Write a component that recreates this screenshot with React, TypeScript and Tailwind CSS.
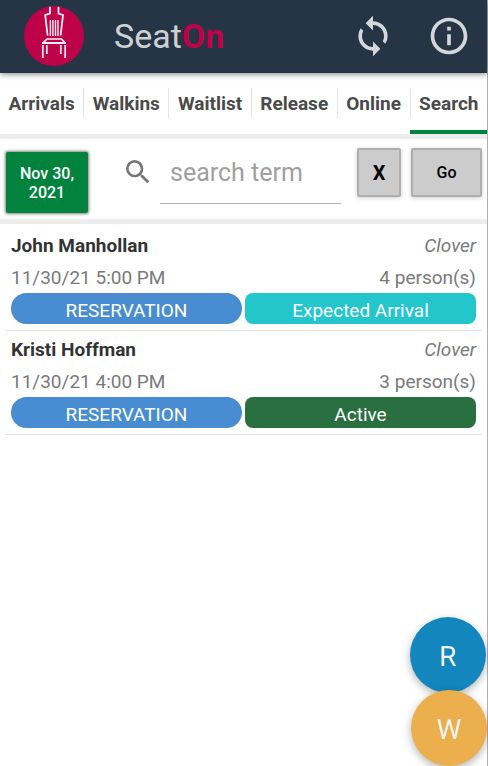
import React, { useState } from 'react';
import { MdInfoOutline, MdSearch, MdSync } from 'react-icons/md';

interface Reservation {
  id: number;
  name: string;
  time: string;
  location: string;
  persons: number;
  status: 'EXPECTED' | 'ACTIVE';
}

const tabs = ['Arrivals', 'Walkins', 'Waitlist', 'Release', 'Online', 'Search'];

const reservations: Reservation[] = [
  { id: 1, name: 'John Manhollan', time: '11/30/21 5:00 PM', location: 'Clover', persons: 4, status: 'EXPECTED' },
  { id: 2, name: 'Kristi Hoffman', time: '11/30/21 4:00 PM', location: 'Clover', persons: 3, status: 'ACTIVE' }
];

const getStatusColor = (status: Reservation['status']) => {
  switch (status) {
    case 'ACTIVE':
      return 'bg-[#2a6f3f]';
    default:
      return 'bg-[#23c6cb]';
  }
};

const getStatusLabel = (status: Reservation['status']) => {
  switch (status) {
    case 'ACTIVE':
      return 'Active';
    default:
      return 'Expected Arrival';
  }
};

function Logo() {
  return (
    <svg viewBox="0 0 60 60" className="size-15 shrink-0" fill="none" stroke="#f9eff3" aria-hidden="true">
      <circle cx="30" cy="30" r="30" fill="#bd0249" stroke="none" />
      {/* Back of the chair */}
      <path d="M26 .8v6.700l-4.800 1.500 2.400 20.500M34.500 .8v6.700l4.500 1.500-2.400 20.500" strokeWidth="1.8" />
      <path d="M26.400 14v16M28.900 14v16M31.500 14v16M34 14v16" strokeWidth="1.4" />
      {/* Seat */}
      <path d="M23 33h14.500l3.500 3.800H19z" strokeWidth="1.7" strokeLinejoin="round" />
      <path d="M18 37h24" strokeWidth="2" />
      {/* Legs */}
      <path d="M18.800 39v13M22.800 39v9M36.800 39v9M41.200 39v13" strokeWidth="1.7" />
    </svg>
  );
}

export default function App() {
  const [activeTab, setActiveTab] = useState('Search');
  const [term, setTerm] = useState('');

  return (
    <div className="min-h-screen border-r border-[#b0b0b0] bg-white font-[Roboto,sans-serif]">
      {/* Header */}
      <header className="relative flex h-[73px] items-center bg-[#253545] pr-4 pl-6 pb-0.5 shadow-[0_1px_6px_rgba(0,0,0,0.5)]">
        <Logo />
        <h1 className="ml-[30px] flex-1 text-[34px] leading-10 text-[#cfd1d2]">
          Seat<span className="font-bold text-[#bd0249]">On</span>
        </h1>
        <div className="flex items-center gap-8 text-[#d3d7da]">
          <button type="button" aria-label="Refresh">
            <MdSync className="size-11" />
          </button>
          <button type="button" aria-label="Info">
            <MdInfoOutline className="size-11" />
          </button>
        </div>
      </header>

      {/* Tabs */}
      <nav className="flex h-[61px]">
        {tabs.map((tab, i) => (
          <button
            key={tab}
            type="button"
            onClick={() => setActiveTab(tab)}
            className={`flex grow items-center border-b-4 pt-0.5 ${tab === activeTab ? 'border-b-[#02833d]' : 'border-b-transparent'}`}
          >
            <span
              className={`flex h-[30px] grow items-center justify-center pt-1 text-[19px] font-bold text-[#4a4a4a] ${i === 0 ? '' : 'border-l border-[#e4e4e4]'}`}
            >
              {tab}
            </span>
          </button>
        ))}
      </nav>

      {/* Search bar */}
      <form
        onSubmit={(e) => e.preventDefault()}
        className="flex h-[90px] items-start border-y-[5px] border-[#ededed] pt-[9px] pr-[5px] pl-1.5"
      >
        <button
          type="button"
          className="mt-1 h-[61px] w-[82px] rounded-xs bg-[#02833d] px-2 text-base leading-[19px] font-medium text-white shadow-[0_0_3px_1px_rgba(0,0,0,0.5)]"
        >
          Nov 30, 2021
        </button>
        <label htmlFor="term" className="mt-2 ml-[34px]">
          <MdSearch className="size-8 text-[#757575]" role="img" aria-label="Search term" />
        </label>
        <input
          id="term"
          value={term}
          onChange={(e) => setTerm(e.target.value)}
          placeholder="search term"
          className="ml-1.5 h-14 min-w-0 flex-1 border-b border-[#b5b5b5] px-2.5 pb-1.5 text-[25px] text-[#444444] outline-none placeholder:text-[#a0a0a0]"
        />
        <button
          type="button"
          onClick={() => setTerm('')}
          className="ml-4 h-[49px] w-11 rounded-xs border-2 border-[#aeaeae] bg-[#cccccc] text-xl font-bold text-black shadow-[0_1px_4px_rgba(0,0,0,0.2)]"
        >
          X
        </button>
        <button
          type="submit"
          className="ml-2.5 h-[49px] w-[71px] rounded-xs border-2 border-[#aeaeae] bg-[#cccccc] text-base font-medium text-black shadow-[0_1px_4px_rgba(0,0,0,0.2)]"
        >
          Go
        </button>
      </form>

      {/* Results */}
      <ul className="px-1.5 pt-[3px] text-[19px] leading-6 text-[#7a7a7a]">
        {reservations.map((r) => (
          <li key={r.id} className="border-b border-[#dedede] px-[5px] pt-[7px] pb-1.5">
            <div className="flex justify-between">
              <h2 className="font-bold text-[#333333]">{r.name}</h2>
              <span className="italic">{r.location}</span>
            </div>
            <div className="flex justify-between pt-2">
              <span>{r.time}</span>
              <span>{r.persons} person(s)</span>
            </div>
            <div className="mt-[3px] grid grid-cols-2 gap-[3px] text-center text-white">
              <span className="h-[31px] rounded-full bg-[#488cd2] pt-1.5">RESERVATION</span>
              <span className={`h-[31px] rounded-lg pt-1.5 ${getStatusColor(r.status)}`}>{getStatusLabel(r.status)}</span>
            </div>
          </li>
        ))}
      </ul>

      {/* Floating actions */}
      <div className="fixed right-px bottom-0 flex flex-col items-end text-[28px] text-[#f2f2f2]">
        <button
          type="button"
          aria-label="New reservation"
          className="mr-px size-[76px] rounded-full bg-[#1286bd] pt-1 shadow-[0_3px_8px_rgba(0,0,0,0.3)]"
        >
          R
        </button>
        <button
          type="button"
          aria-label="New walkin"
          className="-mt-[3px] size-[76px] rounded-full bg-[#ebb04d] pt-1 shadow-[0_3px_8px_rgba(0,0,0,0.3)]"
        >
          W
        </button>
      </div>
    </div>
  );
}
